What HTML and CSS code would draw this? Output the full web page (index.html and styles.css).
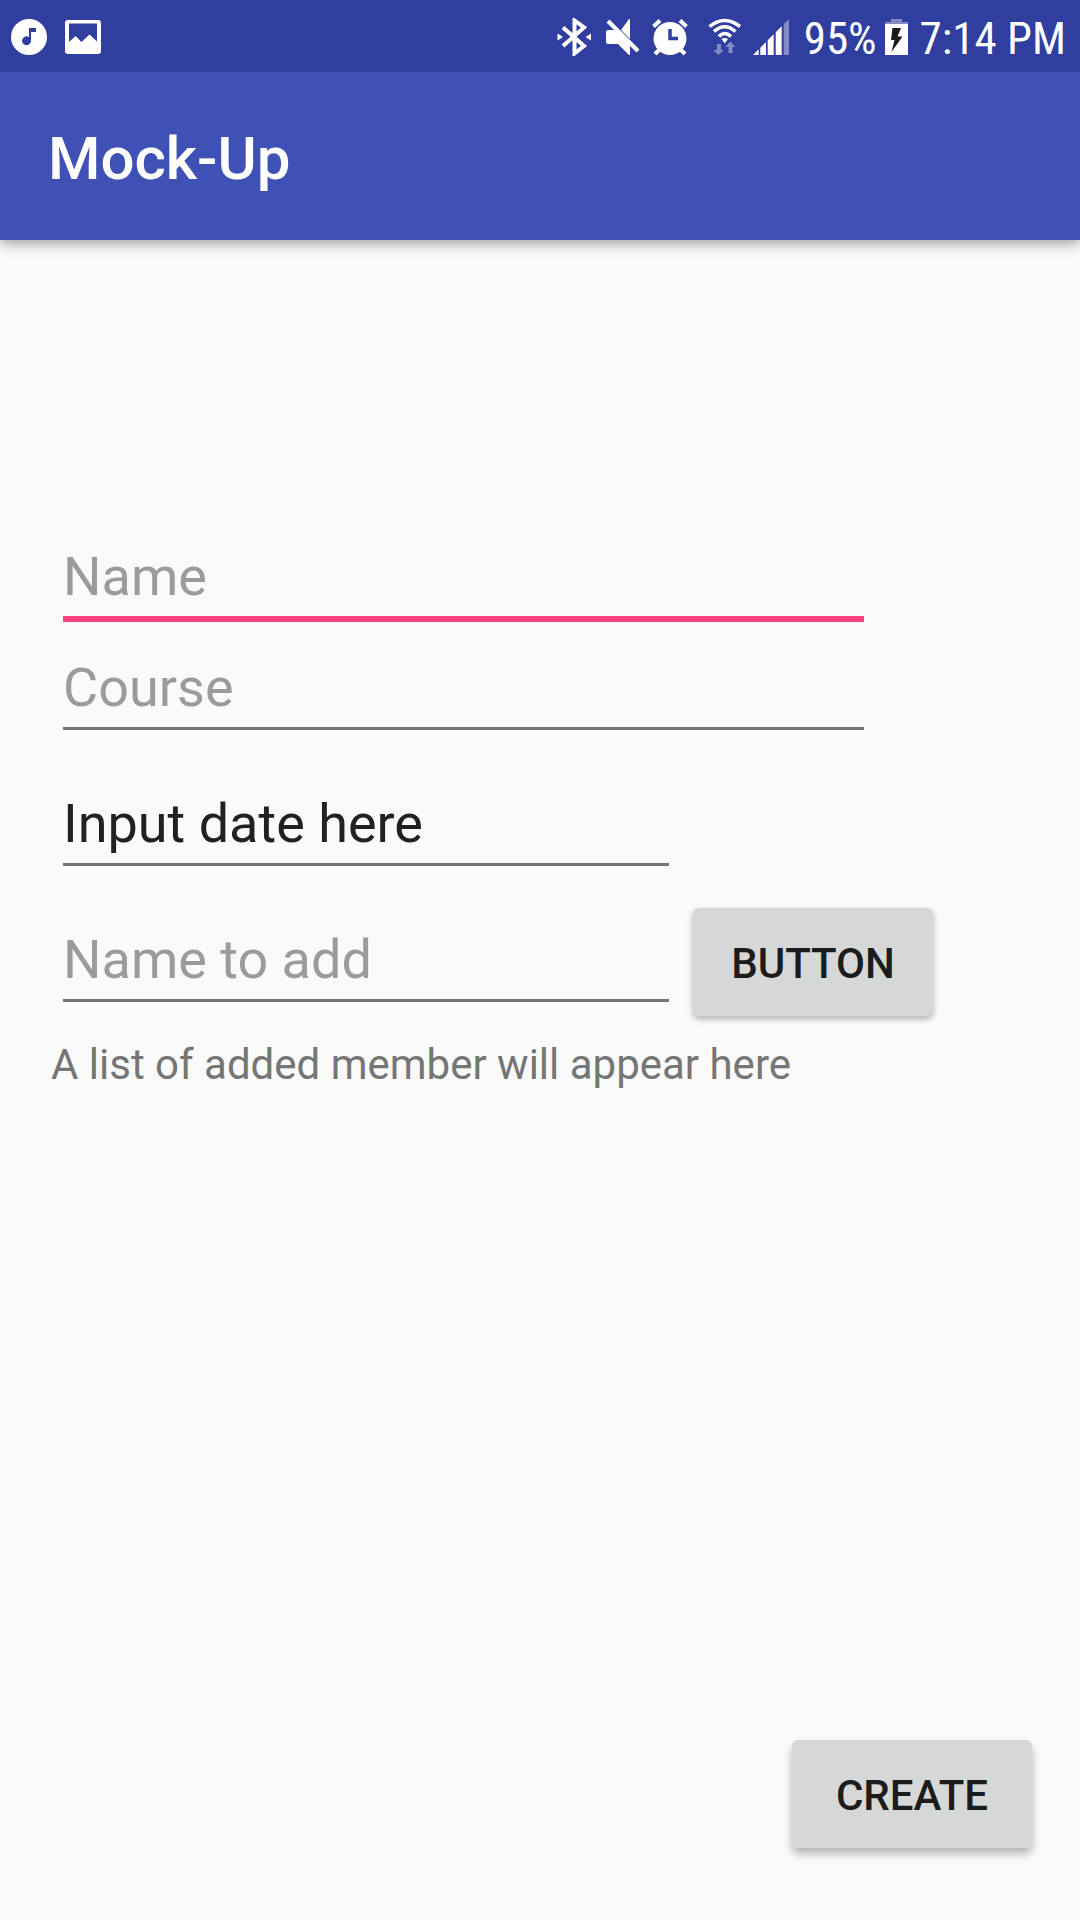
FILE: index.html
```html
<!DOCTYPE html>
<html lang="en">
<head>
<meta charset="utf-8">
<meta name="viewport" content="width=device-width, initial-scale=1">
<title>Mock-Up</title>
<link rel="stylesheet" href="styles.css">
</head>
<body>
<div class="status-bar">
  <div class="notifications">
    <svg width="36" height="38" viewBox="0 0 36 38" aria-hidden="true">
      <circle cx="18" cy="19" r="18" fill="#fff"/>
      <path fill="#303e9f" d="M18 10h7v4h-5v9a4.500 4.500 0 1 1-2-4z"/>
    </svg>
    <svg width="36" height="38" viewBox="0 0 36 38" aria-hidden="true">
      <path fill="#fff" fill-rule="evenodd" d="M3 2h30q3 0 3 3v28q0 3-3 3H3q-3 0-3-3V5q0-3 3-3zM4 5.500V24l6.500-6 6 6L24.500 16.500 32 23.500V5.500z"/>
    </svg>
  </div>
  <div class="system-icons">
    <svg width="36" height="38" viewBox="0 0 36 38" aria-hidden="true">
      <path fill="none" stroke="#fff" stroke-width="4" d="M7 9.500 28 28 18.500 35.500V2.500L28 9.500 7 28"/>
      <path fill="#fff" d="M1.500 15.500 7 19l-5.500 3.500zM35 15.500 29.500 19l5.500 3.500z"/>
    </svg>
    <svg width="36" height="38" viewBox="0 0 36 38" aria-hidden="true">
      <path fill="#fff" d="M4 12h10l12 13v12h-1L14 26H4q-2 0-2-2V14q0-2 2-2zM25 1h1v20l-9-9z"/>
      <path stroke="#fff" stroke-width="4" d="M4 3 34 33"/>
    </svg>
    <svg width="36" height="38" viewBox="0 0 36 38" aria-hidden="true">
      <circle cx="18" cy="20.500" r="16.500" fill="#fff"/>
      <path fill="none" stroke="#fff" stroke-width="4" d="M1.500 8.500 8 2.500M28 2.500l6.500 6M7 32l-4 4M29 32l4 4"/>
      <path fill="none" stroke="#303e9f" stroke-width="3.500" d="M18 11v9.500h8"/>
    </svg>
    <svg width="41" height="38" viewBox="0 0 41 38" aria-hidden="true">
      <path fill="none" stroke="#fff" stroke-width="3.500" d="M9.500 8.500q15-12 30.500 0M14 13.500q10.500-9.500 21.500 0M19 18.500q5.500-6 12 0"/>
      <path fill="#fff" d="M21.500 21q3-2 6.500 0l-3.200 4.500z"/>
      <path fill="#fff" opacity=".4" d="M17 26h4v6h3l-5.500 5-5.500-5h4zM28.500 35v-6H25l5.300-5.500L35.500 29h-3v6z"/>
    </svg>
    <svg width="36" height="38" viewBox="0 0 36 38" aria-hidden="true">
      <path fill="#fff" d="M0 37 5.700 31.300V37zM7.300 29.700 13 24v13H7.300zM14.700 22.300l6-6V37h-6zM22.700 14.300l6-6V37h-6z"/>
      <path fill="#fff" opacity=".4" d="M30.700 6.300 36 1v36h-5.300z"/>
    </svg>
    <div class="battery">
      <span class="status-text">95%</span>
      <svg width="23" height="38" viewBox="0 0 23 38" aria-hidden="true">
        <path fill="#fff" opacity=".4" d="M6 1h11v3h6v3H0V4h6z"/>
        <path fill="#fff" d="M0 6h23v31H0z"/>
        <path fill="#1a1a1a" d="M7.500 10H16l-3.500 8.500h5L6.500 34l3-12H6z"/>
      </svg>
    </div>
    <span class="status-text">7:14 PM</span>
  </div>
</div>
<header class="app-bar">
  <h1 class="title">Mock-Up</h1>
</header>
<main class="content">
  <form class="form">
    <input class="field focused" type="text" placeholder="Name" aria-label="Name">
    <input class="field course" type="text" placeholder="Course" aria-label="Course">
    <input class="field short date" type="text" value="Input date here" aria-label="Date">
    <div class="add-row">
      <input class="field short" type="text" placeholder="Name to add" aria-label="Name to add">
      <button class="button" type="button">BUTTON</button>
    </div>
    <p class="members">A list of added member will appear here</p>
    <button class="button create" type="submit">CREATE</button>
  </form>
</main>
</body>
</html>
```
FILE: styles.css
```css
* {
  box-sizing: border-box;
}

body {
  margin: 0;
  min-height: 100vh;
  display: flex;
  flex-direction: column;
  background: #fafafa;
  color: #212121;
  font-family: Roboto, "Noto Sans", sans-serif;
}

.status-bar {
  position: relative;
  z-index: 1;
  display: flex;
  justify-content: space-between;
  align-items: center;
  height: 72px;
  padding: 2px 14px 0 11px;
  background: #303e9f;
  color: #fff;
}

.notifications {
  display: flex;
  gap: 18px;
}

.system-icons {
  display: flex;
  align-items: center;
  gap: 12px;
}

.battery {
  display: flex;
  align-items: center;
  gap: 8px;
  padding-left: 3px;
}

.status-text {
  padding-top: 4px;
  font-family: "Roboto Condensed", Roboto, sans-serif;
  font-size: 45px;
  line-height: 52px;
  white-space: nowrap;
}

.app-bar {
  display: flex;
  align-items: center;
  height: 168px;
  padding: 6px 48px 0;
  background: #3f51b5;
  color: #fff;
  box-shadow: 0 4px 12px rgba(0, 0, 0, 0.35);
}

.title {
  margin: 0;
  font-size: 60px;
  line-height: 70px;
  font-weight: 500;
}

.content {
  flex: 1;
  display: flex;
  padding: 305px 48px 72px 63px;
}

.form {
  flex: 1;
  display: flex;
  flex-direction: column;
}

.field {
  width: 100%;
  max-width: 801px;
  padding: 0 0 8px;
  border: 0;
  border-bottom: 3px solid #757575;
  border-radius: 0;
  outline: 0;
  background: transparent;
  color: #212121;
  font: 54px/63px Roboto, "Noto Sans", sans-serif;
}

.field::placeholder {
  color: #9b9b9b;
  opacity: 1;
}

.focused {
  border-bottom: 6px solid #ff4081;
}

.short {
  max-width: 606px;
}

.course {
  margin-top: 34px;
}

.date {
  margin-top: 62px;
}

.add-row {
  display: flex;
  align-items: baseline;
  gap: 24px;
  margin-top: 42px;
}

.button {
  flex: none;
  width: 240px;
  height: 108px;
  padding: 4px 0 0;
  border: 0;
  border-radius: 6px;
  background: #d6d7d7;
  color: #1c1c1c;
  font: 500 42px/50px Roboto, "Noto Sans", sans-serif;
  box-shadow: 0 3px 6px rgba(0, 0, 0, 0.3);
}

.members {
  margin: 24px 0 48px -12px;
  color: #757575;
  font-size: 42px;
  line-height: 50px;
}

.create {
  align-self: flex-end;
  margin-top: auto;
  box-shadow: 0 6px 8px rgba(0, 0, 0, 0.28);
}
```
